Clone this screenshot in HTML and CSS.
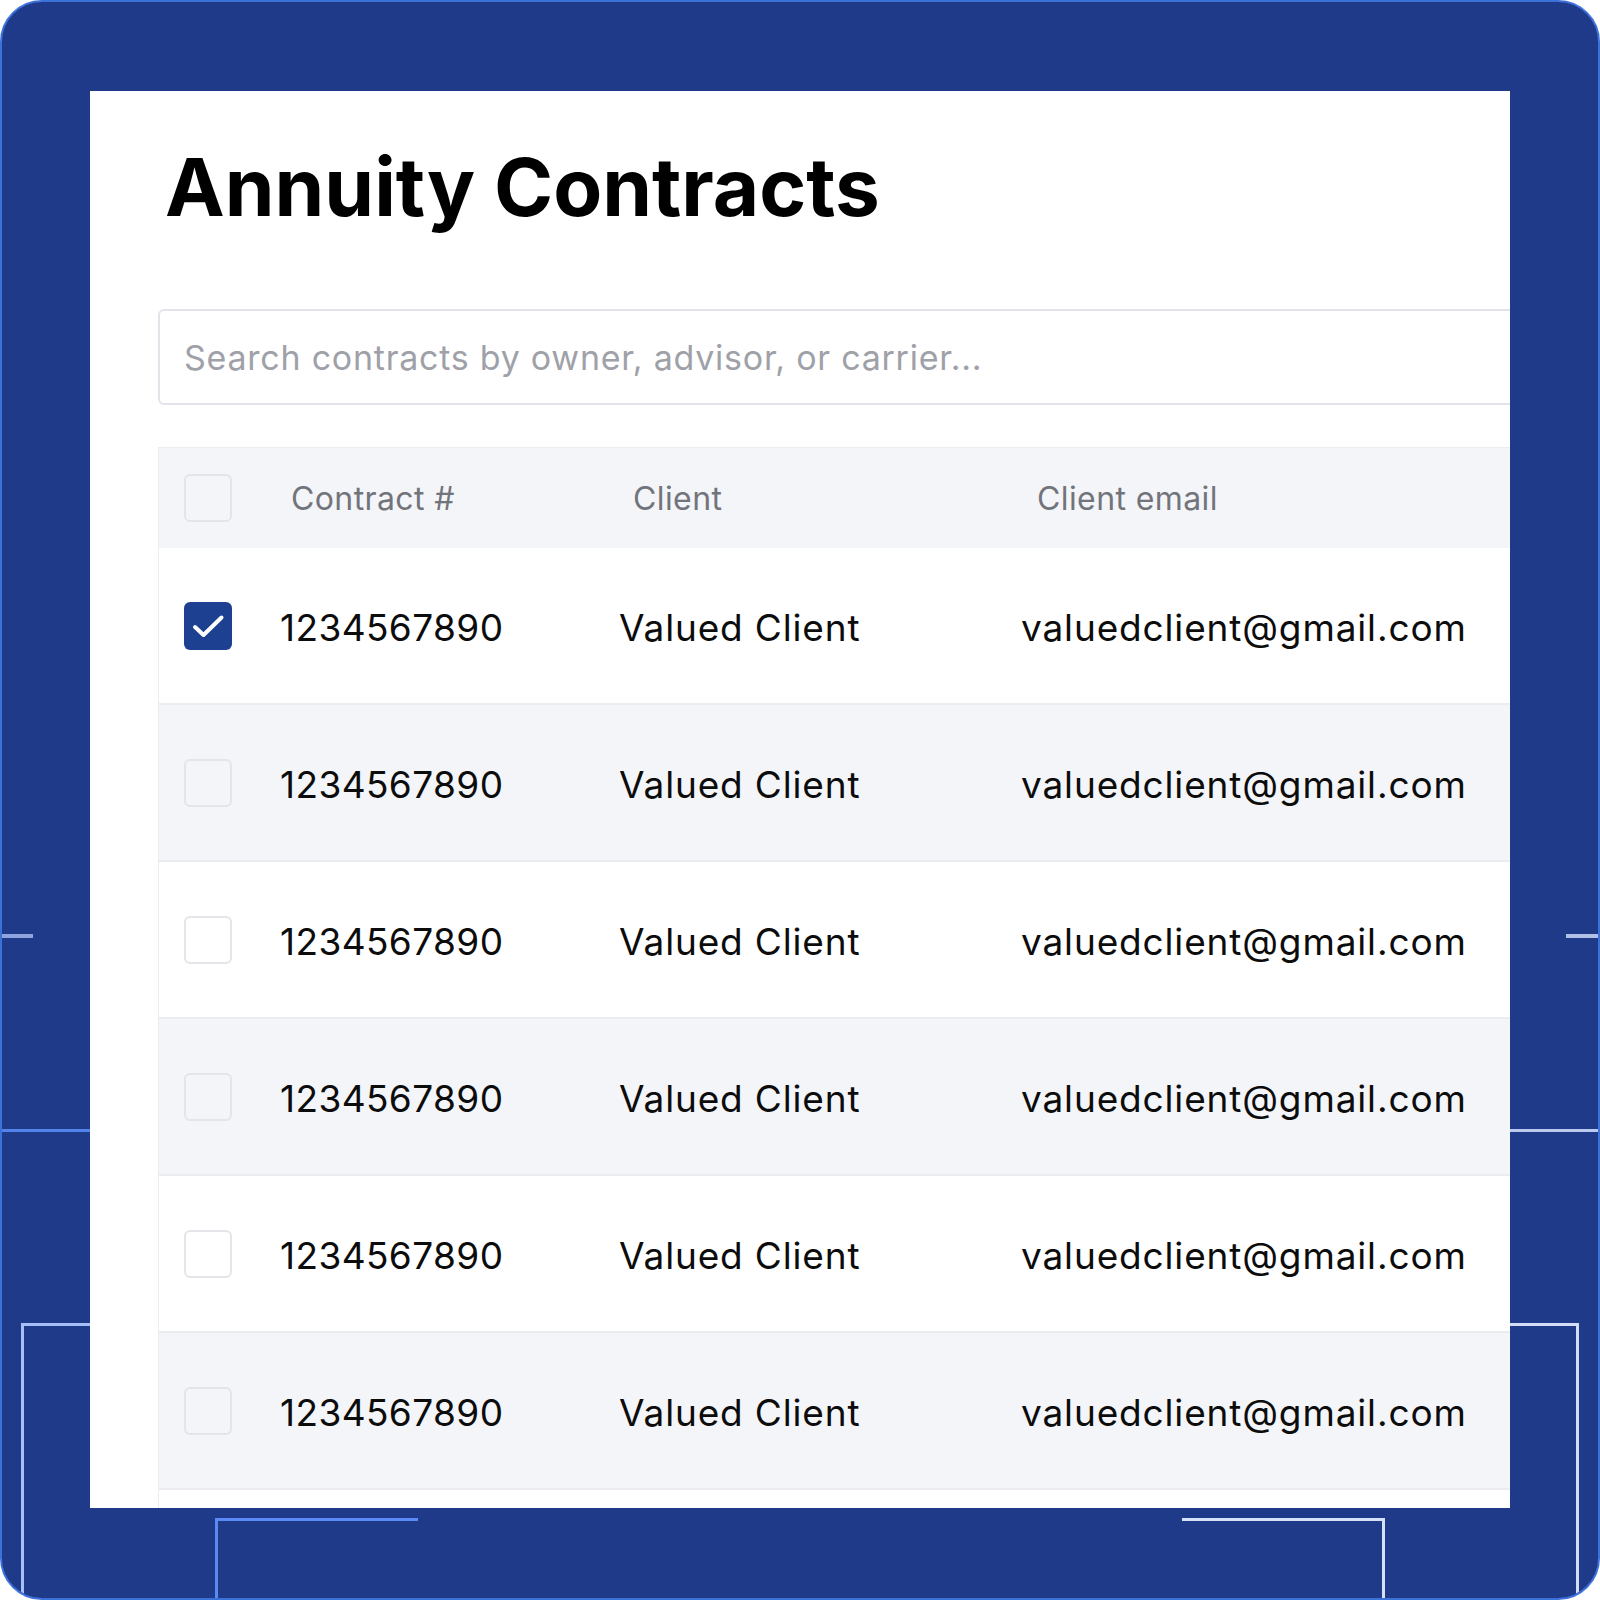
FILE: index.html
```html
<!DOCTYPE html>
<html lang="en">
<head>
<meta charset="utf-8">
<title>Annuity Contracts</title>
<link rel="stylesheet" href="styles.css">
</head>
<body>
<div class="frame">
  <span class="deco l-short"></span>
  <span class="deco l-long"></span>
  <span class="deco l-brk-h"></span>
  <span class="deco l-brk-v"></span>
  <span class="deco r-short"></span>
  <span class="deco r-long"></span>
  <span class="deco r-brk-h"></span>
  <span class="deco r-brk-v"></span>
  <span class="deco bl-h"></span>
  <span class="deco bl-v"></span>
  <span class="deco br-h"></span>
  <span class="deco br-v"></span>

  <div class="card">
    <h1 class="title">Annuity Contracts</h1>
    <div class="search">Search contracts by owner, advisor, or carrier...</div>
    <div class="table">
      <div class="row head">
        <span class="box"></span>
        <span class="th c1">Contract #</span>
        <span class="th c2">Client</span>
        <span class="th c3">Client email</span>
      </div>
      <div class="row">
        <span class="box checked"><svg viewBox="0 0 48 48" width="48" height="48"><path d="M11 25 L19.5 33 L37.5 15.5" fill="none" stroke="#fff" stroke-width="4" stroke-linecap="round" stroke-linejoin="round"/></svg></span>
        <span class="td num">1234567890</span>
        <span class="td">Valued Client</span>
        <span class="td">valuedclient@gmail.com</span>
      </div>
      <div class="row alt">
        <span class="box"></span>
        <span class="td num">1234567890</span>
        <span class="td">Valued Client</span>
        <span class="td">valuedclient@gmail.com</span>
      </div>
      <div class="row">
        <span class="box"></span>
        <span class="td num">1234567890</span>
        <span class="td">Valued Client</span>
        <span class="td">valuedclient@gmail.com</span>
      </div>
      <div class="row alt">
        <span class="box"></span>
        <span class="td num">1234567890</span>
        <span class="td">Valued Client</span>
        <span class="td">valuedclient@gmail.com</span>
      </div>
      <div class="row">
        <span class="box"></span>
        <span class="td num">1234567890</span>
        <span class="td">Valued Client</span>
        <span class="td">valuedclient@gmail.com</span>
      </div>
      <div class="row alt">
        <span class="box"></span>
        <span class="td num">1234567890</span>
        <span class="td">Valued Client</span>
        <span class="td">valuedclient@gmail.com</span>
      </div>
      <div class="row"></div>
    </div>
  </div>
</div>
</body>
</html>
```

FILE: styles.css
```css
html, body {
  margin: 0;
  padding: 0;
  background: #ffffff;
}

.frame {
  position: relative;
  box-sizing: border-box;
  width: 1600px;
  height: 1600px;
  border: 2px solid #3d71da;
  border-radius: 42px;
  background: #1f3a89;
  overflow: hidden;
  padding: 89px 0 0 88px;
}

.deco {
  position: absolute;
  display: block;
}

/* left side decorations */
.l-short { left: 0; top: 932px; width: 31px; height: 4px; background: #8fa4de; }
.l-long  { left: 0; top: 1127px; width: 88px; height: 3px; background: #5283ea; }
.l-brk-h { left: 19px; top: 1321px; width: 69px; height: 3px; background: #a7bff6; }
.l-brk-v { left: 19px; top: 1321px; width: 3px; height: 300px; background: #a7bff6; }

/* right side decorations */
.r-short { left: 1564px; top: 932px; width: 40px; height: 4px; background: #b3c0e8; }
.r-long  { left: 1508px; top: 1127px; width: 100px; height: 3px; background: #bccaf0; }
.r-brk-h { left: 1508px; top: 1321px; width: 69px; height: 3px; background: #d3ddf7; }
.r-brk-v { left: 1574px; top: 1321px; width: 3px; height: 300px; background: #d3ddf7; }

/* bottom decorations */
.bl-h { left: 213px; top: 1516px; width: 203px; height: 3px; background: #5a8af6; }
.bl-v { left: 213px; top: 1516px; width: 3px; height: 100px; background: #5a8af6; }
.br-h { left: 1180px; top: 1516px; width: 203px; height: 3px; background: #d6e0f8; }
.br-v { left: 1380px; top: 1516px; width: 3px; height: 100px; background: #d6e0f8; }

.card {
  box-sizing: border-box;
  width: 1420px;
  height: 1417px;
  background: #ffffff;
  overflow: hidden;
  padding: 56px 0 0 68px;
  font-family: "Inter", "Liberation Sans", sans-serif;
}

.title {
  margin: 0 0 82px 7px;
  font-size: 80px;
  line-height: 1;
  font-weight: 700;
  color: #000000;
  white-space: nowrap;
}

.search {
  box-sizing: border-box;
  width: 1500px;
  height: 96px;
  border: 2px solid #e3e4e9;
  border-radius: 6px;
  padding-left: 24px;
  display: flex;
  align-items: center;
  font-size: 34px;
  letter-spacing: 0.75px;
  color: #9fa1a8;
  white-space: nowrap;
}

.table {
  margin-top: 42px;
  width: 1500px;
  border-left: 1px solid #ebecf0;
  border-top: 1px solid #ebecf0;
}

.row {
  display: grid;
  grid-template-columns: 121px 339px 402px 1fr;
  align-items: center;
  height: 157px;
  box-sizing: border-box;
  border-bottom: 2px solid #ebecf0;
  background: #ffffff;
}

.row.alt {
  background: #f4f5f9;
}

.row.head {
  height: 100px;
  background: #f4f5f8;
  border-bottom: none;
}

.box {
  box-sizing: border-box;
  display: block;
  width: 48px;
  height: 48px;
  margin-left: 25px;
  border: 2px solid #e4e5e9;
  border-radius: 6px;
  background: transparent;
}

.box.checked {
  border: none;
  background: #1d4190;
}

.box svg {
  display: block;
}

.th {
  font-size: 32px;
  letter-spacing: 0.4px;
  color: #72747b;
  white-space: nowrap;
}

.th.c1 { padding-left: 11px; }
.th.c2 { padding-left: 14px; }
.th.c3 { padding-left: 16px; }

.td {
  font-size: 37px;
  letter-spacing: 0.85px;
  color: #0c0c0c;
  white-space: nowrap;
  padding-top: 4px;
}

.td.num {
  letter-spacing: 0.4px;
}
```
